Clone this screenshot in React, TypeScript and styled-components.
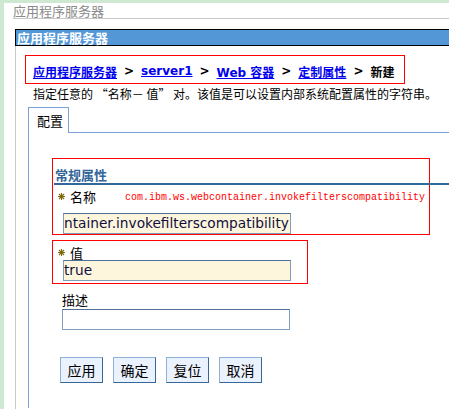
import React from 'react';
import styled, { createGlobalStyle } from 'styled-components';

const GlobalStyle = createGlobalStyle`
  html, body {
    margin: 0;
    padding: 0;
    background: #ffffff;
  }
  body {
    font-family: "DejaVu Sans", "Noto Sans CJK SC", sans-serif;
    font-size: 12px;
    color: #000000;
  }
`;

const cjk = `"Noto Sans CJK SC", "DejaVu Sans", sans-serif`;

const Frame = styled.div`
  min-height: 406px;
  border-top: 3px solid #cfe8d1;
  border-left: 4px solid #cfe8d1;
  padding-left: 9px;
  overflow: hidden;
`;

const PageTitle = styled.div`
  height: 15px;
  line-height: 15px;
  font-family: ${cjk};
  font-size: 13px;
  color: #8a8a8a;
  border-bottom: 1px solid #c8c8c8;
`;

const HeaderBar = styled.div`
  margin: 10px 0 0 2px;
  height: 15px;
  line-height: 15px;
  padding-left: 1px;
  background: #5397d7;
  border: 1px solid #000000;
  border-right: none;
  color: #ffffff;
  font-family: ${cjk};
  font-weight: 700;
  font-size: 13px;
`;

const Content = styled.div`
  margin-left: 2px;
  border-left: 1px solid #c8c8c8;
  padding: 9px 0 0 9px;
  min-height: 354px;
`;

const Annotated = styled.div<{ $w: number; $h: number }>`
  box-sizing: border-box;
  width: ${({ $w }) => $w}px;
  height: ${({ $h }) => $h}px;
  border: 1px solid #ff0000;
`;

const Crumbs = styled(Annotated)`
  display: flex;
  align-items: center;
  gap: 7px;
  padding: 3px 0 0 7px;
  font-weight: 700;
  font-size: 12px;
  white-space: nowrap;
`;

const CrumbLink = styled.a`
  color: #0000ee;
  text-decoration: underline;
  cursor: pointer;
`;

const Sep = styled.span`
  color: #000000;
`;

const Current = styled.span`
  font-family: ${cjk};
`;

const Intro = styled.div`
  margin: 3px 0 0 8px;
  line-height: 14px;
  font-family: ${cjk};
  font-size: 12px;
  white-space: nowrap;
`;

const TabRow = styled.div`
  display: flex;
  margin: 6px 0 0 3px;
`;

const Tab = styled.div`
  box-sizing: border-box;
  width: 41px;
  height: 26px;
  padding: 6px 0 0 8px;
  border: 1px solid #7f9fd8;
  border-bottom: none;
  font-family: ${cjk};
  font-size: 13px;
  line-height: 14px;
`;

const TabFill = styled.div`
  flex: 1;
  border-bottom: 1px solid #7f9fd8;
`;

const Panel = styled.div`
  margin-left: 3px;
  border-left: 1px solid #7f9fd8;
  padding: 25px 0 0 23px;
  min-height: 250px;
`;

const SectionBox = styled(Annotated)`
  padding-top: 9px;
`;

const SectionTitle = styled.div`
  margin: 0 -21px 0 1px;
  padding-left: 1px;
  height: 15px;
  line-height: 14px;
  border-bottom: 2px solid #336699;
  color: #336699;
  font-family: ${cjk};
  font-weight: 700;
  font-size: 13px;
`;

const LabelRow = styled.div<{ $top: number }>`
  display: flex;
  align-items: center;
  margin: ${({ $top }) => $top}px 0 0 5px;
  height: 14px;
  font-family: ${cjk};
  font-size: 13px;
  white-space: nowrap;
`;

const LabelText = styled.span`
  flex: none;
`;

const Required = styled.svg`
  width: 7px;
  height: 7px;
  margin-right: 5px;
  flex: none;
`;

const HintName = styled.span`
  flex: none;
  margin-left: 29px;
  margin-top: 2px;
  font-family: "Liberation Mono", monospace;
  font-size: 10px;
  color: #ff0000;
`;

const Field = styled.div<{ $filled?: boolean; $top?: number }>`
  box-sizing: border-box;
  width: 228px;
  height: 21px;
  margin: ${({ $top = 2 }) => $top}px 0 0 10px;
  padding: 1px 0 0 0;
  border: 1px solid #7f9db9;
  border-top-color: #4f6f95;
  background: ${({ $filled }) => ($filled ? '#fdf6dd' : '#ffffff')};
  font-family: "DejaVu Sans", sans-serif;
  font-size: 13.7px;
  line-height: 17px;
  color: #101040;
  white-space: nowrap;
  overflow: hidden;
`;

const ValueBox = styled(Annotated)`
  margin-top: 5px;
  padding-top: 3px;
`;

const PlainLabel = styled.div`
  margin: 9px 0 0 10px;
  height: 14px;
  line-height: 14px;
  font-family: ${cjk};
  font-size: 13px;
`;

const Actions = styled.div`
  display: flex;
  gap: 10px;
  margin: 27px 0 0 8px;
`;

const ActionButton = styled.button`
  box-sizing: border-box;
  width: 43px;
  height: 26px;
  padding: 0;
  background: #eaf2fd;
  border: 1px solid #8fb1d6;
  border-right-color: #38679c;
  border-bottom-color: #38679c;
  font-family: ${cjk};
  font-size: 14px;
  color: #000000;
  cursor: pointer;
`;

const RequiredMark = () => (
  <Required viewBox="0 0 7 7">
    <g stroke="#7d6b12" strokeWidth="1.1">
      <line x1="3.5" y1="0" x2="3.5" y2="7" />
      <line x1="0" y1="3.5" x2="7" y2="3.5" />
      <line x1="1" y1="1" x2="6" y2="6" />
      <line x1="6" y1="1" x2="1" y2="6" />
    </g>
  </Required>
);

const crumbs = ['应用程序服务器', 'server1', 'Web 容器', '定制属性'];

export default function App() {
  return (
    <>
      <GlobalStyle />
      <Frame>
        <PageTitle>应用程序服务器</PageTitle>
        <HeaderBar>应用程序服务器</HeaderBar>
        <Content>
          <Crumbs $w={380} $h={29}>
            {crumbs.map((c) => (
              <React.Fragment key={c}>
                <CrumbLink>{c}</CrumbLink>
                <Sep>&gt;</Sep>
              </React.Fragment>
            ))}
            <Current>新建</Current>
          </Crumbs>
          <Intro>指定任意的 “名称－ 值” 对。该值是可以设置内部系统配置属性的字符串。</Intro>
          <TabRow>
            <Tab>配置</Tab>
            <TabFill />
          </TabRow>
          <Panel>
            <SectionBox $w={378} $h={77}>
              <SectionTitle>常规属性</SectionTitle>
              <LabelRow $top={4}>
                <RequiredMark />
                <LabelText>名称</LabelText>
                <HintName>com.ibm.ws.webcontainer.invokefilterscompatibility</HintName>
              </LabelRow>
              <Field $filled $top={10}>ntainer.invokefilterscompatibility</Field>
            </SectionBox>
            <ValueBox $w={256} $h={44}>
              <LabelRow $top={1}>
                <RequiredMark />
                <LabelText>值</LabelText>
              </LabelRow>
              <Field $filled $top={1}>true</Field>
            </ValueBox>
            <PlainLabel>描述</PlainLabel>
            <Field />
            <Actions>
              <ActionButton>应用</ActionButton>
              <ActionButton>确定</ActionButton>
              <ActionButton>复位</ActionButton>
              <ActionButton>取消</ActionButton>
            </Actions>
          </Panel>
        </Content>
      </Frame>
    </>
  );
}
